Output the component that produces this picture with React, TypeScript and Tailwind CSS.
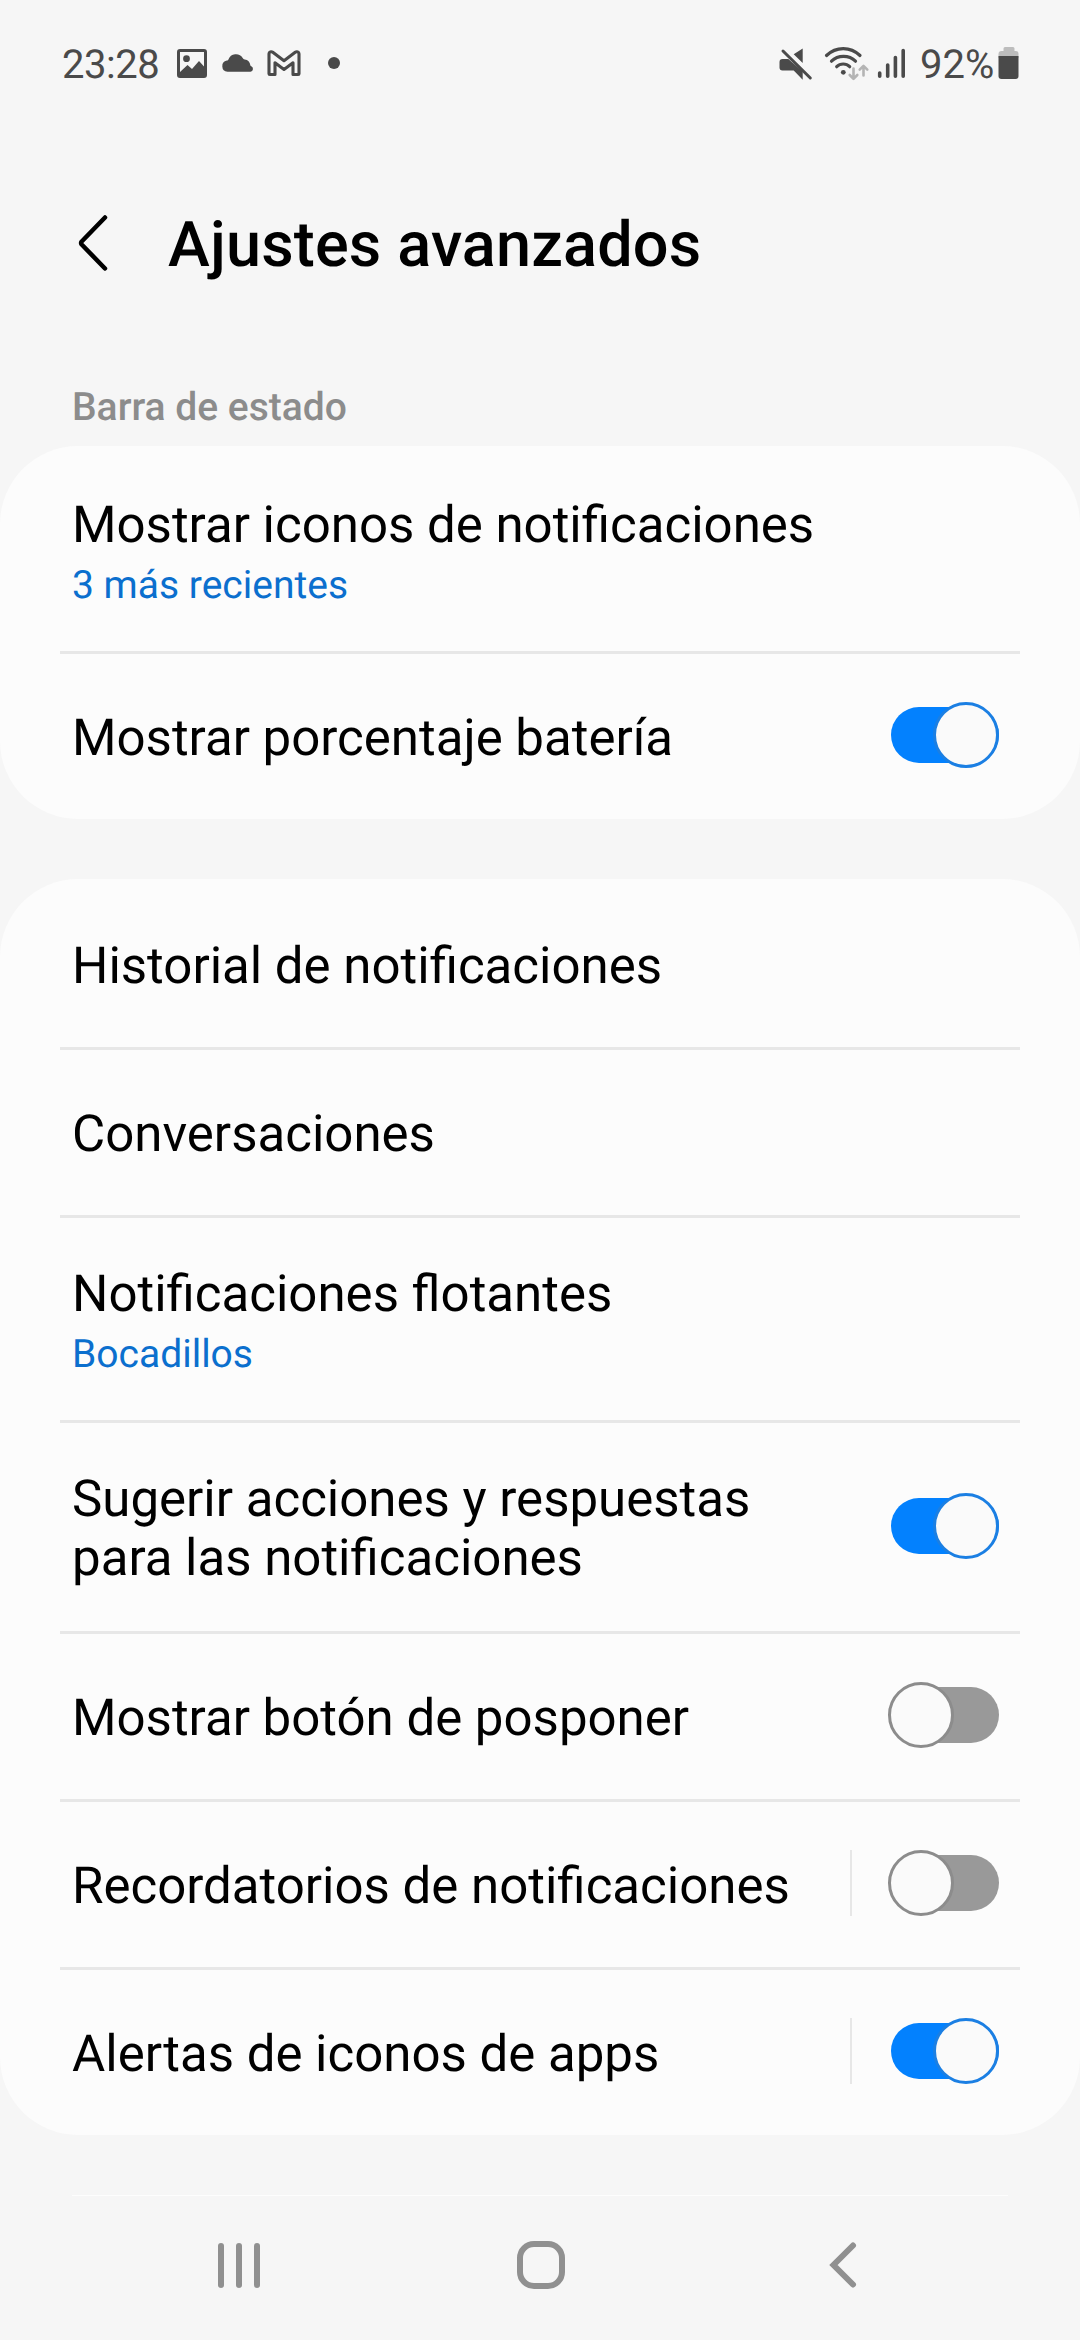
import { Fragment, useState } from "react";
import clsx from "clsx";

interface SettingItem {
  id: string;
  title: string;
  subtitle?: string;
  toggle?: boolean;
  separated?: boolean;
  // two-line rows are taller and start closer to the divider
  size: string;
}

const SINGLE = "h-[168px] pt-[58px]";
const WITH_SUBTITLE = "h-[205px] pt-[50px]";
const WRAPPED = "h-[211px] pt-[50px]";

const statusBarItems: SettingItem[] = [
  { id: "icons", title: "Mostrar iconos de notificaciones", subtitle: "3 más recientes", size: WITH_SUBTITLE },
  { id: "battery", title: "Mostrar porcentaje batería", toggle: true, size: SINGLE },
];

const notificationItems: SettingItem[] = [
  { id: "history", title: "Historial de notificaciones", size: SINGLE },
  { id: "conversations", title: "Conversaciones", size: SINGLE },
  { id: "floating", title: "Notificaciones flotantes", subtitle: "Bocadillos", size: WITH_SUBTITLE },
  { id: "suggest", title: "Sugerir acciones y respuestas para las notificaciones", toggle: true, size: WRAPPED },
  { id: "snooze", title: "Mostrar botón de posponer", toggle: true, size: SINGLE },
  { id: "reminders", title: "Recordatorios de notificaciones", toggle: true, separated: true, size: SINGLE },
  { id: "badges", title: "Alertas de iconos de apps", toggle: true, separated: true, size: SINGLE },
];

function StatusBar() {
  return (
    <div className="flex h-[128px] items-center justify-between pl-[62px] pr-[61px] text-[#4a4a4a]">
      <div className="flex items-center">
        <span className="w-[115px] pt-[2px] text-[40px] leading-[48px] tracking-[-0.5px]">23:28</span>
        <svg className="h-[36px] w-[170px]" viewBox="177 46 170 36" fill="none">
          <path
            fill="currentColor"
            fillRule="evenodd"
            d="M180 49h24a3 3 0 0 1 3 3v23a3 3 0 0 1-3 3h-24a3 3 0 0 1-3-3V52a3 3 0 0 1 3-3zM180 52v20l7.500-7 4.500 4 7-8 5 5.500V52zM186.500 55.300a3.400 3.400 0 1 1 0 6.800 3.400 3.400 0 0 1 0-6.800z"
          />
          <path
            fill="currentColor"
            d="M227.500 71.700a5.600 5.600 0 0 1-.6-11.100c.8-.1 1.200-.4 1.500-1.100a8 8 0 0 1 14.300-1.500c.5.800 1 1.200 2 1.400a6.500 6.500 0 0 1 5.600 5.600c.1.700.3 1 1 1.200a2.900 2.900 0 0 1-.8 5.500z"
          />
          <path
            stroke="currentColor"
            strokeWidth="3.100"
            strokeLinejoin="round"
            d="M269 73.700V53.800c0-2 2.200-2.700 3.800-1.500L284 60.700l11.200-8.400c1.600-1.200 3.800-.5 3.800 1.500V73.700a.8.8 0 0 1-.8.8h-5.200V62.800L284 69.500l-9-6.700V74.500h-5.200a.8.8 0 0 1-.8-.8z"
          />
          <circle cx="334" cy="63" r="6" fill="currentColor" />
        </svg>
      </div>
      <div className="flex items-center">
        <svg className="h-[36px] w-[129px]" viewBox="776 46 129 36" fill="none">
          <path fill="currentColor" d="M801.700 48.500v14.500l-9-8.700zM781.500 59h5.800l14.400 12.500v8.300l-9-9.300h-11.200a3 3 0 0 1-3-3V62a3 3 0 0 1 3-3z" />
          <path stroke="currentColor" strokeWidth="3" strokeLinecap="round" d="M782 51l27.300 27" />
          <g stroke="currentColor" strokeWidth="3.200" strokeLinecap="round">
            <path d="M825.500 55.500c9.500-9.300 24-9.300 33.500 0" />
            <path d="M830.500 61.200c6.500-6.500 17.500-6.500 24 0" />
            <path d="M835.700 66.700c3.600-3.600 9.400-3.600 13 0" />
          </g>
          <circle cx="842.300" cy="72.300" r="2.400" fill="currentColor" />
          <g stroke="#b4b4b4" strokeWidth="2.600" strokeLinecap="round" strokeLinejoin="round">
            <path d="M852.500 68.500v10M848.700 75l3.800 3.800 3.800-3.800" />
            <path d="M862.500 75.500V66M858.700 69.700l3.800-3.800 3.800 3.800" />
          </g>
          <g stroke="currentColor" strokeWidth="3.600" strokeLinecap="round">
            <path d="M878.700 73v3.200M886.700 65v11.200M894.400 57.500v18.700M902.200 50.500v25.700" />
          </g>
        </svg>
        <span className="ml-[14px] w-[78px] pt-[2px] text-[40px] leading-[48px]">92%</span>
        <svg className="h-[36px] w-[21px]" viewBox="997.500 46 21 36">
          <path fill="#bdbdbd" d="M1004.500 47h8a1.500 1.500 0 0 1 1.500 1.500V51h1a3 3 0 0 1 3 3v4h-20v-4a3 3 0 0 1 3-3h2v-2.500a1.500 1.500 0 0 1 1.500-1.500z" />
          <path fill="currentColor" d="M998 56h20v20a3 3 0 0 1-3 3h-14a3 3 0 0 1-3-3z" />
        </svg>
      </div>
    </div>
  );
}

function Toggle({ checked, onChange }: { checked: boolean; onChange: () => void }) {
  return (
    <button
      role="switch"
      aria-checked={checked}
      onClick={onChange}
      className={clsx("flex h-[66px] w-[111px] shrink-0 items-center", checked && "pl-[3px]")}
    >
      <span
        className={clsx(
          "flex h-[56px] w-full items-center rounded-full",
          checked ? "justify-end bg-[#0381fe]" : "ml-[3px] bg-[#999999]"
        )}
      >
        <span
          className={clsx(
            "size-[66px] shrink-0 rounded-full border-[3px] bg-[#fafafa]",
            checked ? "border-[#1b7fe3]" : "-ml-[3px] border-[#8c8c8c]"
          )}
        />
      </span>
    </button>
  );
}

interface SettingsCardProps {
  items: SettingItem[];
  values: Record<string, boolean>;
  onToggle: (id: string) => void;
}

function SettingsCard({ items, values, onToggle }: SettingsCardProps) {
  return (
    <section className="rounded-[78px] bg-[#fcfcfc] px-[60px]">
      {items.map((item, index) => (
        <Fragment key={item.id}>
          {index > 0 && <div className="-mb-[3px] h-[3px] bg-[#e7e7e7]" />}
          <div className="flex items-center justify-between pl-[12px] pr-[21px]">
            <div className={clsx(item.size, item.toggle ? "w-[720px]" : "w-full")}>
              <p className="text-[51px] leading-[59px] text-black">{item.title}</p>
              {item.subtitle && <p className="text-[39px] leading-[60px] text-[#0b6fce]">{item.subtitle}</p>}
            </div>
            {item.toggle && (
              <div className="flex items-center gap-[36px]">
                {item.separated && <span className="h-[66px] w-[2px] bg-[#e7e7e7]" />}
                <Toggle checked={values[item.id]} onChange={() => onToggle(item.id)} />
              </div>
            )}
          </div>
        </Fragment>
      ))}
    </section>
  );
}

function NavigationBar() {
  return (
    <nav className="mx-[72px] mt-[60px] flex h-[145px] border-t border-[#fdfdfd] text-[#909090]">
      <button className="flex h-[138px] flex-1 items-center justify-center gap-[12px] pl-[16px]">
        <span className="h-[45px] w-[6px] rounded-full bg-[#909090]" />
        <span className="h-[45px] w-[6px] rounded-full bg-[#909090]" />
        <span className="h-[45px] w-[6px] rounded-full bg-[#909090]" />
      </button>
      <button className="flex h-[138px] flex-1 items-center justify-center">
        <span className="size-[48px] rounded-[17px] border-[6px] border-[#909090]" />
      </button>
      <button className="flex h-[138px] flex-1 items-center justify-center pr-[14px]">
        <svg className="h-[48px] w-[30px]" viewBox="0 0 30 48" fill="none" stroke="currentColor" strokeWidth="6" strokeLinecap="round">
          <path d="M25 4.500L5.500 24 25 43.500" />
        </svg>
      </button>
    </nav>
  );
}

export default function App() {
  const [values, setValues] = useState<Record<string, boolean>>({
    battery: true,
    suggest: true,
    snooze: false,
    reminders: false,
    badges: true,
  });

  const toggleItem = (id: string) => {
    setValues((current) => ({ ...current, [id]: !current[id] }));
  };

  return (
    <div className="flex h-[2340px] w-[1080px] flex-col overflow-hidden bg-[#f6f6f6] font-['Roboto',sans-serif] [text-rendering:geometricPrecision]">
      <StatusBar />
      <header className="flex h-[234px] items-center pl-[76px]">
        <button aria-label="Atrás" className="pb-[4px]">
          <svg className="h-[60px] w-[34px]" viewBox="0 0 34 60" fill="none" stroke="black" strokeWidth="4.500" strokeLinecap="round" strokeLinejoin="round">
            <path d="M29 4.500L5.700 28.500q-1.200 1.500 0 3L29 55.500" />
          </svg>
        </button>
        <h1 className="ml-[58px] pt-[2px] text-[63px] font-medium leading-[74px] tracking-[0.17px] text-black">
          Ajustes avanzados
        </h1>
      </header>
      <h2 className="h-[84px] pl-[72px] pt-[22px] text-[39px] font-medium leading-[46px] text-[#8c8c8c]">
        Barra de estado
      </h2>
      <SettingsCard items={statusBarItems} values={values} onToggle={toggleItem} />
      <div className="h-[60px]" />
      <SettingsCard items={notificationItems} values={values} onToggle={toggleItem} />
      <NavigationBar />
    </div>
  );
}
